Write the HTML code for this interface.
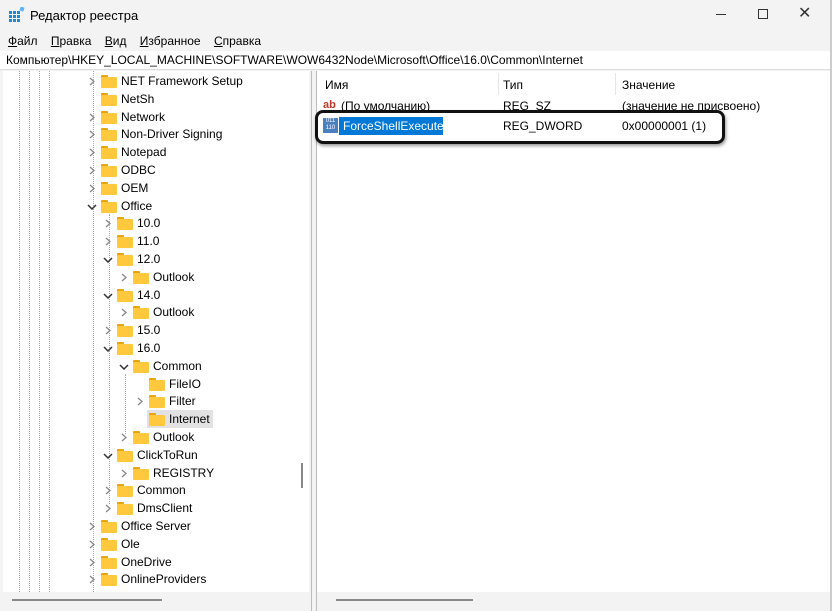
<!DOCTYPE html>
<html><head><meta charset="utf-8"><style>
*{margin:0;padding:0;box-sizing:border-box}
body{width:832px;height:611px;overflow:hidden;background:#f3f3f3;font-family:"Liberation Sans","Noto Sans CJK SC",sans-serif;font-size:12px;color:#000;position:relative}
.abs{position:absolute}
.row{position:absolute;height:18px;line-height:18px;white-space:nowrap}
.fold{position:absolute;width:16px;height:13px;top:3px}
.fold:before{content:"";position:absolute;left:0;top:0;width:7px;height:3px;background:#e8a40e;border-radius:1px 1px 0 0}
.fold:after{content:"";position:absolute;left:0;top:2px;width:16px;height:11px;background:#ffc83d;border-radius:1px}
.vl{position:absolute;border-left:1px dotted #aaa}
</style></head><body>
<div class="abs" style="left:0;top:0;width:832px;height:31px;background:#f3f3f3"></div>
<svg class="abs" style="left:9px;top:7px" width="16" height="16"><g fill="#1e8ad6"><rect x="0" y="4" width="3" height="3"/><rect x="4" y="4" width="3" height="3"/><rect x="8" y="4" width="3" height="3"/><rect x="0" y="8" width="3" height="3"/><rect x="4" y="8" width="3" height="3"/><rect x="8" y="8" width="3" height="3"/><rect x="0" y="12" width="3" height="3"/><rect x="4" y="12" width="3" height="3"/><rect x="8" y="12" width="3" height="3"/></g><rect x="11" y="0" width="4" height="4" fill="#5bb4f0" transform="rotate(20 13 2)"/></svg>
<div class="abs" style="left:30px;top:8px;font-size:13px">Редактор реестра</div>
<div class="abs" style="left:716px;top:14px;width:10px;height:1px;background:#333"></div>
<div class="abs" style="left:758px;top:9px;width:10px;height:10px;border:1px solid #333"></div>
<div class="abs" style="left:798px;top:3px;font-size:16px;color:#333">✕</div>
<div class="abs" style="left:8px;top:34px"><u>Ф</u>айл&nbsp;&nbsp;&nbsp;&nbsp;<u>П</u>равка&nbsp;&nbsp;&nbsp;&nbsp;<u>В</u>ид&nbsp;&nbsp;&nbsp;&nbsp;<u>И</u>збранное&nbsp;&nbsp;&nbsp;&nbsp;<u>С</u>правка</div>
<div class="abs" style="left:0;top:51px;width:832px;height:19px;background:#fff;border-bottom:1px solid #ddd"></div>
<div class="abs" style="left:6px;top:53px">Компьютер\HKEY_LOCAL_MACHINE\SOFTWARE\WOW6432Node\Microsoft\Office\16.0\Common\Internet</div>
<div class="abs" style="left:3px;top:71px;width:306px;height:521px;background:#fff"></div>
<div class="vl" style="left:19px;top:71px;height:521px"></div>
<div class="vl" style="left:29px;top:71px;height:521px"></div>
<div class="vl" style="left:39px;top:71px;height:521px"></div>
<div class="vl" style="left:49px;top:71px;height:521px"></div>
<div class="vl" style="left:93px;top:71px;height:521px"></div>
<div class="vl" style="left:109px;top:214px;height:290px"></div>
<div class="vl" style="left:125px;top:374px;height:60px"></div>
<div id="tree"></div>
<div class="abs" style="left:301px;top:463px;width:2px;height:25px;background:#888"></div>
<div class="abs" style="left:12px;top:599px;width:150px;height:2px;background:#888"></div>
<div class="abs" style="left:311px;top:71px;width:1px;height:540px;background:#bbb"></div>
<div class="abs" style="left:316px;top:71px;width:1px;height:540px;background:#bbb"></div>
<div class="abs" style="left:317px;top:71px;width:513px;height:521px;background:#fff"></div>
<div class="abs" style="left:498px;top:73px;width:1px;height:22px;background:#e5e5e5"></div>
<div class="abs" style="left:615px;top:73px;width:1px;height:22px;background:#e5e5e5"></div>
<div class="abs" style="left:325px;top:78px">Имя</div>
<div class="abs" style="left:503px;top:78px">Тип</div>
<div class="abs" style="left:622px;top:78px">Значение</div>
<div class="abs" style="left:323px;top:99px;color:#c0392b;font-weight:bold;font-size:11px">ab</div>
<div class="abs" style="left:341px;top:99px">(По умолчанию)</div>
<div class="abs" style="left:503px;top:99px">REG_SZ</div>
<div class="abs" style="left:622px;top:99px">(значение не присвоено)</div>
<div class="abs" style="left:323px;top:118px;width:15px;height:15px;background:#4a7fc0;color:#fff;font-size:6px;line-height:7px;text-align:center">011<br>110</div>
<div class="abs" style="left:339px;top:117px;width:104px;height:18px;background:#0078d7"></div>
<div class="abs" style="left:343px;top:119px;color:#fff">ForceShellExecute</div>
<div class="abs" style="left:503px;top:119px">REG_DWORD</div>
<div class="abs" style="left:622px;top:119px">0x00000001 (1)</div>
<div class="abs" style="left:315px;top:110px;width:410px;height:34px;border:3px solid #111;border-radius:8px;box-shadow:1px 2px 3px rgba(0,0,0,.4)"></div>
<div class="abs" style="left:336px;top:599px;width:137px;height:2px;background:#888"></div>
<div class="abs" style="left:830px;top:0;width:2px;height:611px;background:#ccc"></div>
<script>
var d=[[0,"NET Framework Setup",">"],[0,"NetSh",""],[0,"Network",">"],[0,"Non-Driver Signing",">"],[0,"Notepad",">"],[0,"ODBC",">"],[0,"OEM",">"],[0,"Office","v"],[1,"10.0",">"],[1,"11.0",">"],[1,"12.0","v"],[2,"Outlook",">"],[1,"14.0","v"],[2,"Outlook",">"],[1,"15.0",">"],[1,"16.0","v"],[2,"Common","v"],[3,"FileIO",""],[3,"Filter",">"],[3,"Internet","s"],[2,"Outlook",">"],[1,"ClickToRun","v"],[2,"REGISTRY",">"],[1,"Common",">"],[1,"DmsClient",">"],[0,"Office Server",">"],[0,"Ole",">"],[0,"OneDrive",">"],[0,"OnlineProviders",">"]];
var h="";d.forEach(function(r,i){var y=72+i*17.8,x=101+r[0]*16;
if(r[2]=="s")h+='<div class="abs" style="left:'+(x-2)+'px;top:'+y+'px;width:66px;height:18px;background:#e2e2e2"></div>';
if(r[2]==">")h+='<svg class="abs" style="left:'+(x-13)+'px;top:'+(y+5)+'px" width="8" height="9"><path d="M2 1L6 4.5L2 8" fill="none" stroke="#888" stroke-width="1.3"/></svg>';
if(r[2]=="v")h+='<svg class="abs" style="left:'+(x-14)+'px;top:'+(y+7)+'px" width="10" height="6"><path d="M1 1L5 5L9 1" fill="none" stroke="#333" stroke-width="1.5"/></svg>';
h+='<div class="fold" style="left:'+x+'px;top:'+(y+3)+'px"></div><div class="row" style="left:'+(x+20)+'px;top:'+y+'px">'+r[1]+'</div>';});
document.getElementById("tree").innerHTML=h;
</script>
</body></html>
